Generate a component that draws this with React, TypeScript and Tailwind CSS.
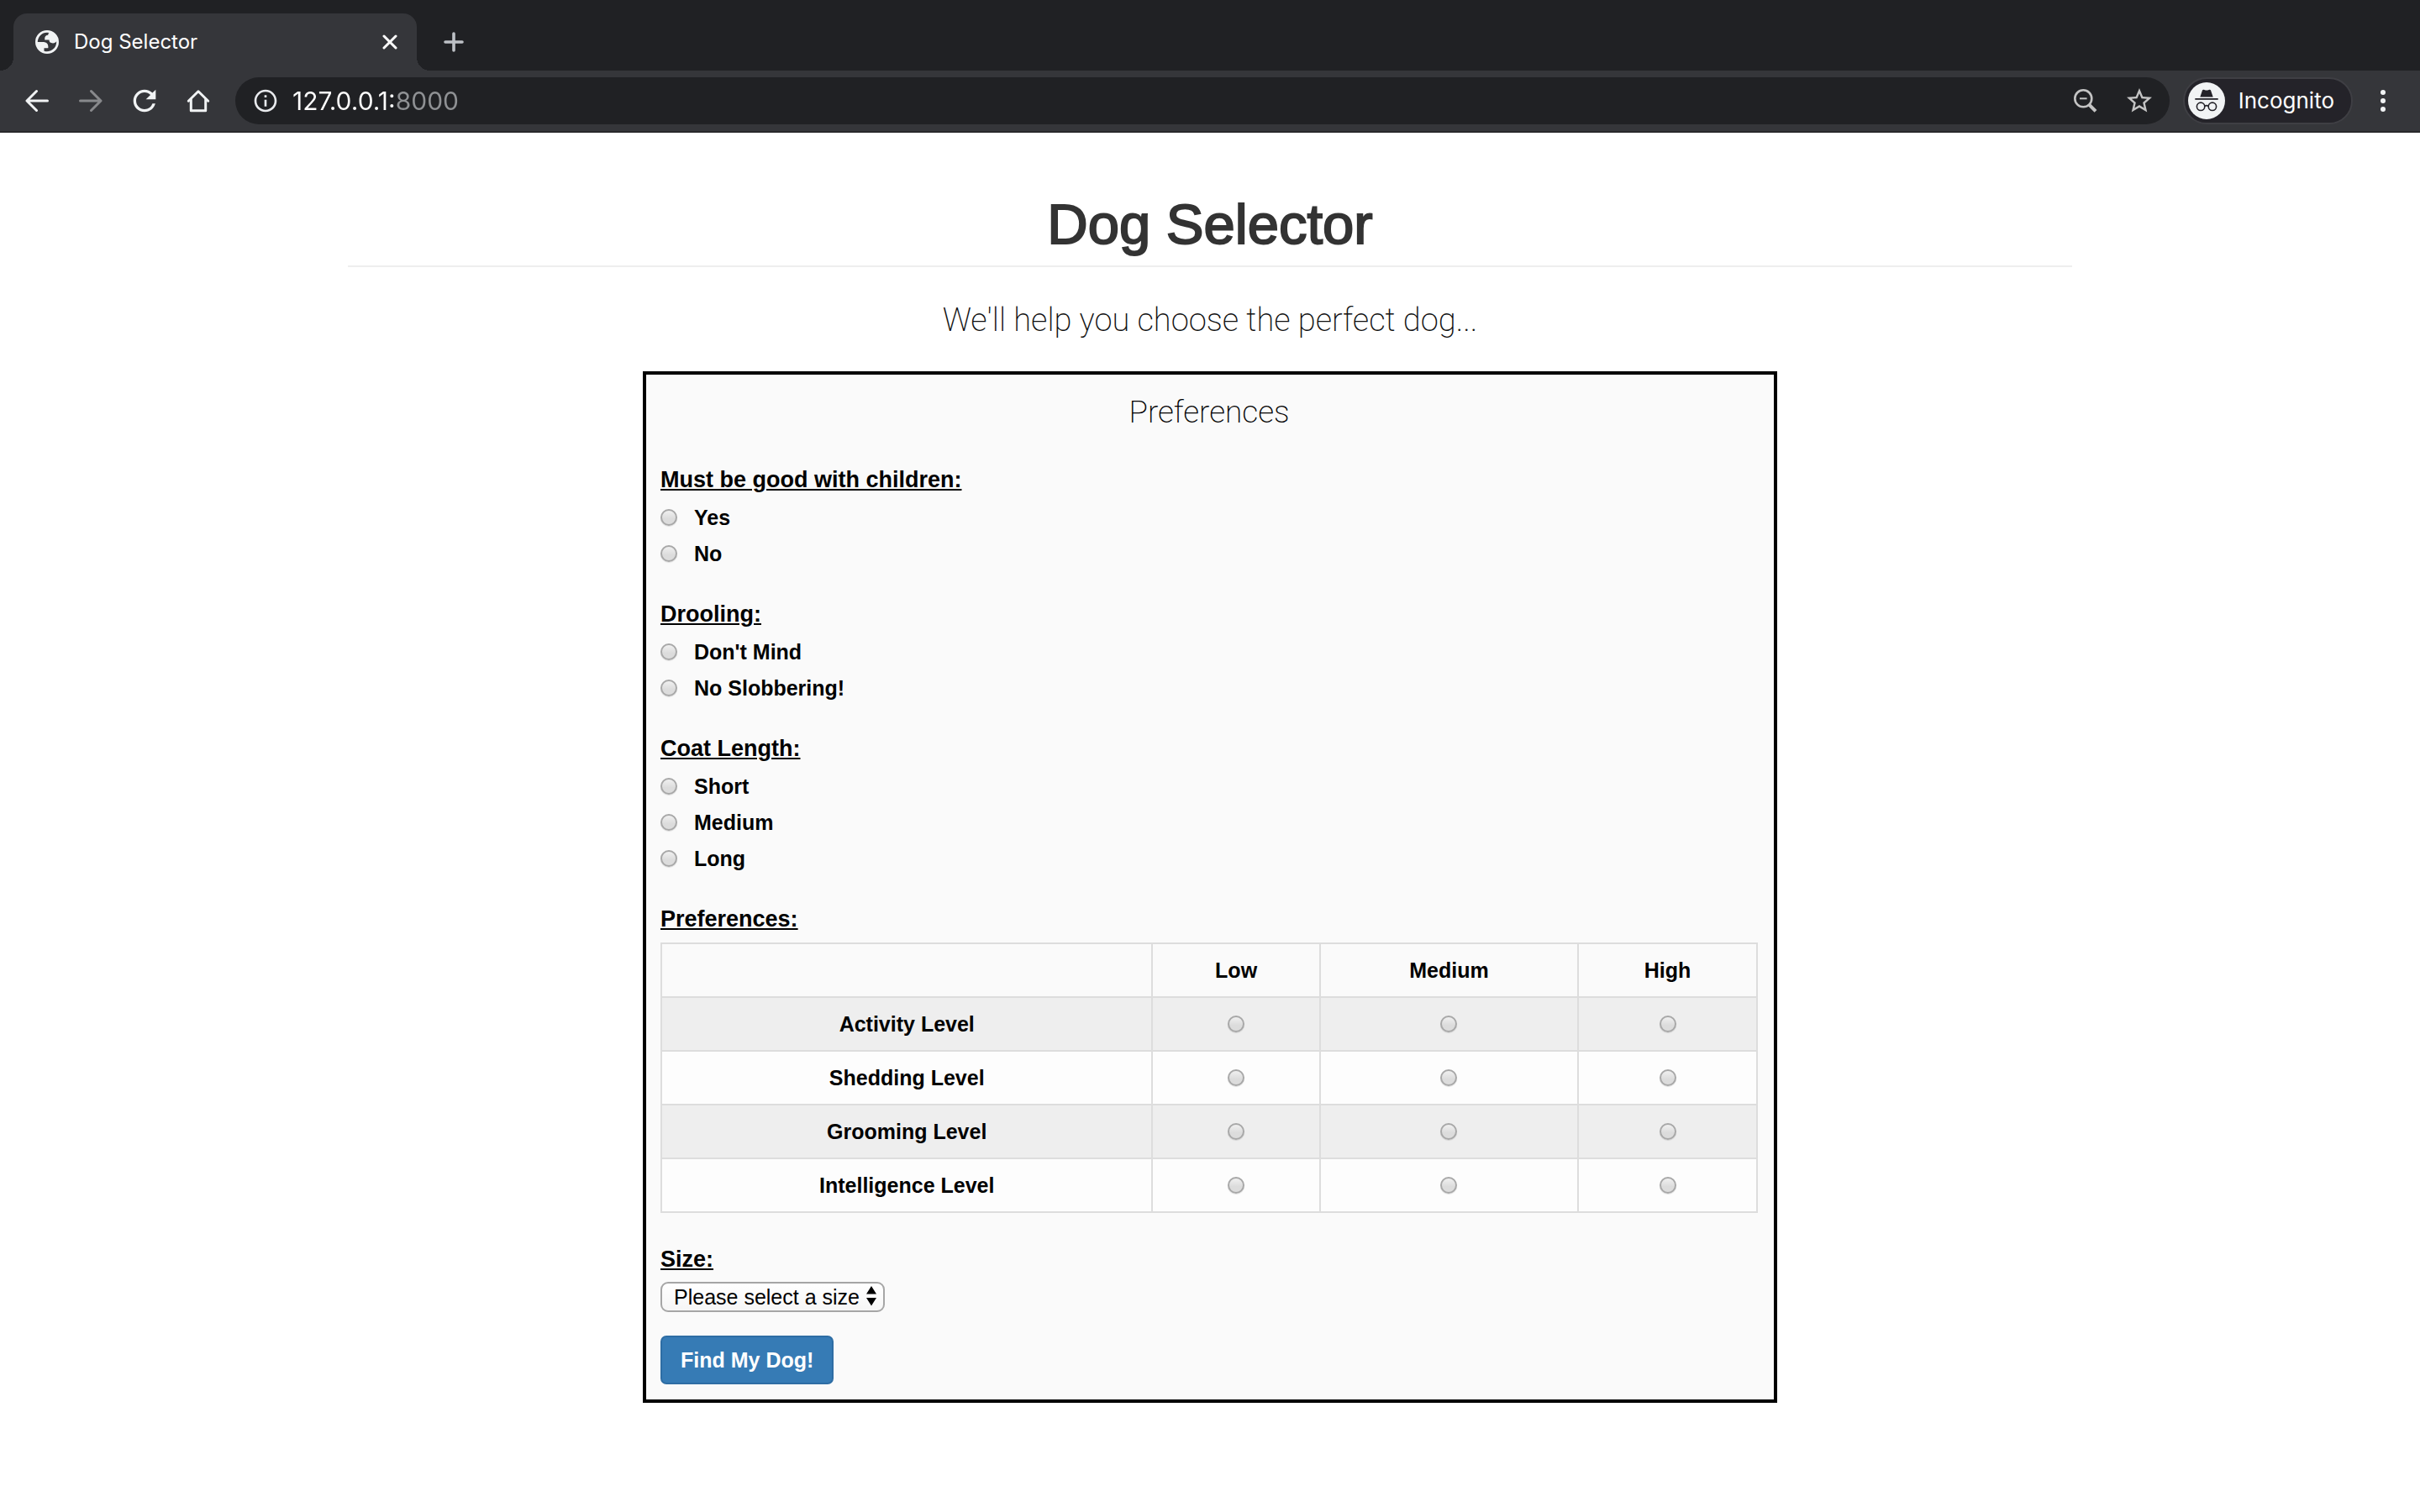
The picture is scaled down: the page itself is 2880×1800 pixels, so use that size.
import { useState } from "react";
import type { ReactNode } from "react";
import { MdInfoOutline, MdRefresh, MdStarBorder } from "react-icons/md";

const choiceGroups = [
  { legend: "Must be good with children:", name: "children", options: ["Yes", "No"] },
  { legend: "Drooling:", name: "drooling", options: ["Don't Mind", "No Slobbering!"] },
  { legend: "Coat Length:", name: "coat", options: ["Short", "Medium", "Long"] },
];

const levels = ["Low", "Medium", "High"];
const traits = ["Activity Level", "Shedding Level", "Grooming Level", "Intelligence Level"];

function GlobeIcon() {
  return (
    <svg viewBox="2 2 20 20" className="size-7 shrink-0" fill="#f1f3f4" aria-hidden="true">
      <path
        fillRule="evenodd"
        d="M12 2a10 10 0 1 0 0 20a10 10 0 0 0 0-20zM4 12h4.4c3.407.022 4.922 1.73 4.543 5.127H9.488v2.47a8.004 8.004 0 0 0 10.498-8.083C19.327 12.504 18.332 13 17 13c-2.137 0-3.206-.916-3.206-2.75h-3.748c-.274-2.728.683-4.092 2.87-4.092 0-.975.327-1.597.811-1.97A8.004 8.004 0 0 0 4 12z"
      />
    </svg>
  );
}

function ArrowIcon({ flipped = false }: { flipped?: boolean }) {
  return (
    <svg viewBox="0 0 28 28" className="size-7" fill="none" stroke="currentColor" strokeWidth="3" strokeLinecap="round" strokeLinejoin="round" aria-hidden="true">
      <path d={flipped ? "M1.5 14H25.5M14.5 2.5L26 14L14.5 25.5" : "M26.5 14H2.5M13.5 2.5L2 14L13.5 25.5"} />
    </svg>
  );
}

function HomeIcon() {
  return (
    <svg viewBox="0 0 28 28" className="size-7" fill="none" stroke="currentColor" strokeWidth="3" strokeLinejoin="round" strokeLinecap="round" aria-hidden="true">
      <path d="M2.3 14.2L14 2.8L25.7 14.2" />
      <path d="M5.3 12.5V25.7H22.7V12.5" />
    </svg>
  );
}

function ZoomOutIcon() {
  return (
    <svg viewBox="0 0 28 28" className="size-7" fill="none" stroke="currentColor" aria-hidden="true">
      <circle cx="11.3" cy="11.3" r="10" strokeWidth="2.6" />
      <path d="M7 11.3h8.6" strokeWidth="2" />
      <path d="M18 18.3L26 26.3" strokeWidth="4" />
    </svg>
  );
}

function IncognitoIcon() {
  return (
    <svg viewBox="0 0 44 44" className="size-11 shrink-0" aria-hidden="true">
      <circle cx="22" cy="22" r="22" fill="#f1f3f4" />
      <path d="M14.3 17.5L17 9.6c.3-.8 1-1.1 1.8-.8l2 .6c.8.2 1.6.2 2.4 0l2-.6c.8-.3 1.5 0 1.8.8l2.7 7.9z" fill="#242329" />
      <path d="M8.3 19h27.4v1.8H8.3z" fill="#242329" />
      <g fill="none" stroke="#242329" strokeWidth="1.6">
        <circle cx="15.1" cy="28.8" r="4.7" />
        <circle cx="28.9" cy="28.8" r="4.7" />
        <path d="M19.7 28.4c1.4-1 3.2-1 4.6 0" />
      </g>
    </svg>
  );
}

function ToolbarButton({ label, children, muted = false }: { label: string; children: ReactNode; muted?: boolean }) {
  return (
    <button
      type="button"
      aria-label={label}
      className={`flex h-14 w-16 shrink-0 items-center justify-center ${muted ? "text-[#88898c]" : "text-[#f1f3f4]"}`}
    >
      {children}
    </button>
  );
}

function BrowserChrome() {
  const [address, setAddress] = useState("127.0.0.1:8000");
  return (
    <header className="bg-[#202124] font-['Inter',sans-serif]">
      <div className="flex items-end pt-4 pl-4">
        <div className="relative flex h-[68px] w-[480px] items-center rounded-t-2xl bg-[#35363a] pr-5 pl-[26px] text-white">
          <span className="absolute bottom-0 -left-4 size-4 bg-[radial-gradient(circle_at_0_0,#202124_16px,#35363a_16px)]" />
          <span className="absolute -right-4 bottom-0 size-4 bg-[radial-gradient(circle_at_100%_0,#202124_16px,#35363a_16px)]" />
          <GlobeIcon />
          <span className="ml-[18px] flex-1 text-[24px] leading-8">Dog Selector</span>
          <button type="button" aria-label="Close tab" className="flex size-6 items-center justify-center">
            <svg viewBox="0 0 18 18" className="size-[18px]" stroke="currentColor" strokeWidth="3" strokeLinecap="round" aria-hidden="true">
              <path d="M2 2L16 16M16 2L2 16" />
            </svg>
          </button>
        </div>
        <button type="button" aria-label="New tab" className="ml-4 flex h-[68px] w-14 items-center justify-center text-[#bdc1c6]">
          <svg viewBox="0 0 24 24" className="size-6" stroke="currentColor" strokeWidth="3.6" strokeLinecap="round" aria-hidden="true">
            <path d="M12 2V22M2 12H22" />
          </svg>
        </button>
      </div>

      <div className="flex h-[74px] items-center border-b-2 border-[#28282b] bg-[#35363a] pl-3">
        <ToolbarButton label="Back"><ArrowIcon /></ToolbarButton>
        <ToolbarButton label="Forward" muted><ArrowIcon flipped /></ToolbarButton>
        <ToolbarButton label="Reload"><MdRefresh size={40} /></ToolbarButton>
        <ToolbarButton label="Home"><HomeIcon /></ToolbarButton>

        <div className="ml-3 flex h-14 flex-1 items-center rounded-full bg-[#202124] pr-1 pl-5 text-[#c4c4c4]">
          <button type="button" aria-label="Site information" className="text-[#e8eaed]">
            <MdInfoOutline size={32} />
          </button>
          <input
            type="text"
            aria-label="Address"
            value={address}
            onChange={(event) => setAddress(event.target.value)}
            className="ml-4 min-w-0 flex-1 bg-[linear-gradient(90deg,#ffffff_121px,#8f9194_121px)] bg-clip-text text-[30px] leading-9 text-transparent caret-white outline-none"
          />
          <button type="button" aria-label="Zoom" className="flex h-14 w-16 items-center justify-center"><ZoomOutIcon /></button>
          <button type="button" aria-label="Bookmark this page" className="flex h-14 w-16 items-center justify-center"><MdStarBorder size={36} /></button>
        </div>

        <button type="button" className="ml-4 flex h-14 items-center gap-4 rounded-full border-2 border-[#3f3f44] bg-[#242329] pr-5 pl-1 text-[26px] leading-8 text-white">
          <IncognitoIcon />
          Incognito
        </button>
        <button type="button" aria-label="Menu" className="mr-2 flex h-14 w-[72px] items-center justify-center text-[#f1f3f4]">
          <svg viewBox="0 0 6 28" className="h-7 w-1.5" fill="currentColor" aria-hidden="true">
            <circle cx="3" cy="4" r="3" />
            <circle cx="3" cy="14" r="3" />
            <circle cx="3" cy="24" r="3" />
          </svg>
        </button>
      </div>
    </header>
  );
}

function Radio({ name, value, id, label }: { name: string; value: string; id?: string; label?: string }) {
  return (
    <input
      type="radio"
      id={id}
      name={name}
      value={value}
      aria-label={label}
      className="block size-5 appearance-none rounded-full border-2 border-[#a8a8a8] bg-linear-to-b from-[#f0f0f0] to-[#dcdcdc] to-60% shadow-[0_1px_1px_rgba(0,0,0,0.12)] checked:border-[6px] checked:border-[#337ab7]"
    />
  );
}

const headingClass = "block h-[45px] text-[27px] leading-[45px] font-bold underline decoration-2 underline-offset-2";

export default function App() {
  return (
    <div className="min-h-screen bg-white font-['Liberation_Sans',Arial,sans-serif] text-black">
      <BrowserChrome />

      <main className="mx-auto max-w-[2052px] pt-[73px]">
        <h1 className="border-b-2 border-[#eeeeee] pb-[13px] text-center text-[67px] leading-[72px] text-[#333333] [-webkit-text-stroke:2px_#333333]">
          Dog Selector
        </h1>
        <p className="mt-[42px] text-center font-['Roboto',sans-serif] text-[38px] leading-[42px] font-extralight text-[#111111]">
          We'll help you choose the perfect dog...
        </p>

        <form
          onSubmit={(event) => event.preventDefault()}
          className="mx-auto mt-10 mb-16 max-w-[1350px] border-4 border-black bg-[#fafafa] pt-6 pr-[19px] pb-[18px] pl-[17px]"
        >
          <h2 className="mb-[37px] text-center font-['Roboto',sans-serif] text-[37px] leading-[42px] font-extralight">Preferences</h2>

          {choiceGroups.map((group) => (
            <fieldset key={group.name} className="mb-[29px]">
              <legend className={headingClass}>{group.legend}</legend>
              {group.options.map((option) => {
                const id = `${group.name}-${option}`;
                return (
                  <div key={option} className="flex h-[43px] items-center gap-5">
                    <Radio name={group.name} value={option} id={id} />
                    <label htmlFor={id} className="text-[25px] leading-9 font-bold">{option}</label>
                  </div>
                );
              })}
            </fieldset>
          ))}

          <table className="w-full border-collapse text-[25px] leading-9 font-bold">
            <caption className="pb-[5px] text-left">
              <span className={headingClass}>Preferences:</span>
            </caption>
            <thead>
              <tr className="h-16">
                <td className="border-2 border-[#dddddd] px-[15px]" />
                {levels.map((level) => (
                  <th key={level} scope="col" className="border-2 border-[#dddddd] px-[15px]">{level}</th>
                ))}
              </tr>
            </thead>
            <tbody>
              {traits.map((trait) => (
                <tr key={trait} className="h-16 odd:bg-[#eeeeee] even:bg-[#fdfdfd]">
                  <th scope="row" className="border-2 border-[#dddddd] px-[15px] text-center">{trait}</th>
                  {levels.map((level) => (
                    <td key={level} className="border-2 border-[#dddddd] px-[15px]">
                      <div className="flex justify-center">
                        <Radio name={trait} value={level} label={`${trait}: ${level}`} />
                      </div>
                    </td>
                  ))}
                </tr>
              ))}
            </tbody>
          </table>

          <label htmlFor="size" className={`${headingClass} mt-[33px]`}>Size:</label>
          <div className="relative mt-1 w-fit">
            <select
              id="size"
              defaultValue=""
              className="block h-9 appearance-none rounded-[9px] border-2 border-[#a6a6a6] bg-linear-to-b from-white to-[#f6f6f6] pr-7 pb-0.5 pl-3.5 text-[25px] leading-8"
            >
              <option value="">Please select a size</option>
              <option value="small">Small</option>
              <option value="medium">Medium</option>
              <option value="large">Large</option>
            </select>
            <svg viewBox="0 0 12 24" className="pointer-events-none absolute top-[5px] right-2.5 h-6 w-3" aria-hidden="true">
              <path d="M6 0L12 9.5H0zM0 14H12L6 23.5z" />
            </svg>
          </div>

          <button
            type="submit"
            className="mt-7 block h-[58px] rounded-[7px] border-2 border-[#2e6da4] bg-[#367bb5] px-[22px] text-[25px] leading-9 font-bold text-white"
          >
            Find My Dog!
          </button>
        </form>
      </main>
    </div>
  );
}
